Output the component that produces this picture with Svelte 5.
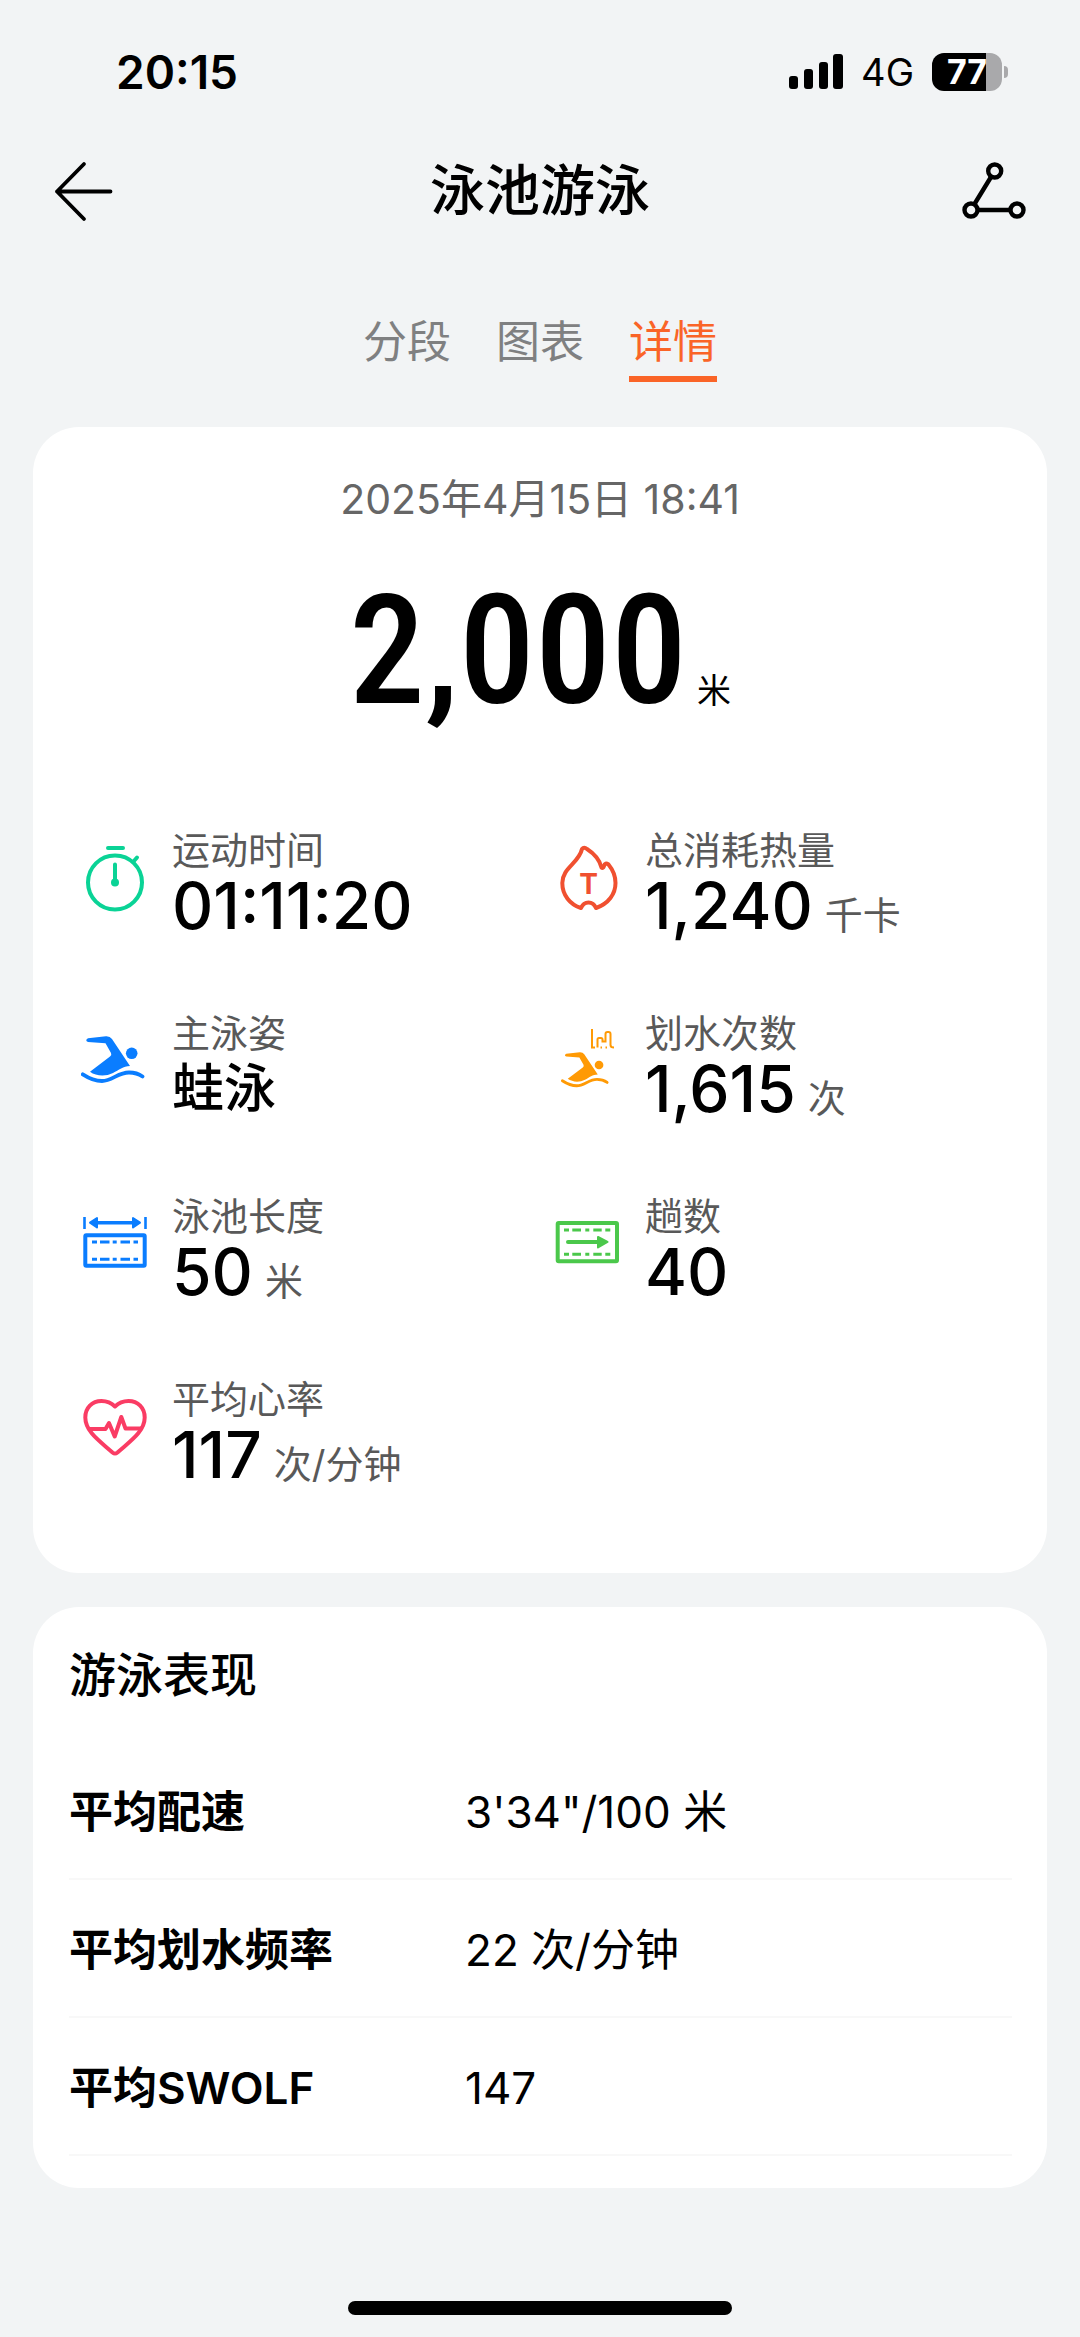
<script lang="ts">
  type Stat = { icon: string; label: string; value: string; unit?: string; text?: boolean };

  const tabs = ["分段", "图表", "详情"];
  let active = $state("详情");

  const stats: Stat[] = [
    { icon: "timer", label: "运动时间", value: "01:11:20" },
    { icon: "flame", label: "总消耗热量", value: "1,240", unit: "千卡" },
    { icon: "swim", label: "主泳姿", value: "蛙泳", text: true },
    { icon: "strokes", label: "划水次数", value: "1,615", unit: "次" },
    { icon: "pool", label: "泳池长度", value: "50", unit: "米" },
    { icon: "laps", label: "趟数", value: "40" },
    { icon: "heart", label: "平均心率", value: "117", unit: "次/分钟" },
  ];

  const performance = [
    { label: "平均配速", value: "3'34\"/100 米" },
    { label: "平均划水频率", value: "22 次/分钟" },
    { label: "平均SWOLF", value: "147" },
  ];
</script>

{#snippet swimmer()}
  <path
    d="M7 10.3 L25 8.2 Q29 8 31 11 L49 38 C42 38 38 42 32 45 C24 49 15 48 9 43.7 L29 28.5 Q31 27 30 25 L24.5 15.3 L7 14 Q3.5 12.5 7 10.3 Z"
    fill="currentColor"
  />
  <circle cx="50.7" cy="25.3" r="5.8" fill="currentColor" />
  <path d="M1.8 46.3 C9 51 14 53 21 53 C31 53 37 44.5 48 44.5 C53 44.5 58 46 61.5 48.5" stroke="currentColor" stroke-width="3.8" stroke-linecap="round" />
{/snippet}

<div class="screen">
  <div class="status">
    <span class="clock">20:15</span>
    <div class="indicators">
      <svg width="54" height="36" viewBox="0 0 54 36" aria-hidden="true">
        <rect x="0" y="22" width="9" height="13" rx="3" />
        <rect x="15" y="15" width="9" height="20" rx="3" />
        <rect x="30" y="8" width="9" height="27" rx="3" />
        <rect x="44" y="0" width="10" height="35" rx="3" />
      </svg>
      <span class="network">4G</span>
      <div class="power">
        <span class="battery">77</span>
        <span class="nub"></span>
      </div>
    </div>
  </div>

  <header class="bar">
    <button class="icon-btn" aria-label="返回">
      <svg width="68" height="68" viewBox="0 0 68 68" fill="none" aria-hidden="true">
        <path d="M32 7 L5 34.5 L32 62 M5 34.5 H58.5" stroke="currentColor" stroke-width="3.8" stroke-linecap="round" stroke-linejoin="round" />
      </svg>
    </button>
    <h1>泳池游泳</h1>
    <button class="icon-btn" aria-label="分享">
      <svg width="68" height="68" viewBox="0 0 68 68" fill="none" stroke="currentColor" stroke-width="4.4" aria-hidden="true">
        <path d="M31 20 L14.5 47 M18 53 H50" />
        <circle cx="34.7" cy="14" r="6.5" />
        <circle cx="11" cy="53" r="6.5" />
        <circle cx="57" cy="53" r="6.5" />
      </svg>
    </button>
  </header>

  <div class="tabs" role="tablist">
    {#each tabs as tab}
      <button
        class="tab"
        class:active={tab === active}
        role="tab"
        aria-selected={tab === active}
        onclick={() => (active = tab)}
      >
        {tab}
      </button>
    {/each}
  </div>

  <main>
    <section class="card summary">
      <p class="date">2025年4月15日 18:41</p>
      <p class="distance">
        <span class="amount">2,000</span>
        <span class="distance-unit">米</span>
      </p>

      <div class="stats">
        {#each stats as stat}
          <div class="stat">
            <svg class="icon {stat.icon}" width="68" height="68" viewBox="0 0 68 68" fill="none" aria-hidden="true">
              {#if stat.icon === "timer"}
                <g stroke="currentColor" stroke-width="4" stroke-linecap="round">
                  <circle cx="34" cy="37.5" r="27" />
                  <path d="M27 3 H42 M34 19.5 V37.5 M52.5 16.5 L56 12.5" />
                </g>
                <circle cx="34" cy="37.5" r="4" fill="currentColor" />
              {:else if stat.icon === "flame"}
                <path
                  d="M28 4 Q30 1.5 33 4 C40 8.5 45.5 14.5 47.5 22.5 Q49 24 50 21 Q51 17 54.5 19.5 C59 25 61.5 31 61.5 38 C61.5 49 54.5 58.5 42 63 C40.5 59.5 38.5 57.5 34.5 57.5 C30.5 57.5 28.5 59.5 27 63 C16 59.5 8.3 50 8.3 38 C8.3 23 25 18 28 4 Z"
                  stroke="currentColor"
                  stroke-width="4"
                  stroke-linejoin="round"
                />
                <text x="34.5" y="48.5" text-anchor="middle">T</text>
              {:else if stat.icon === "swim"}
                {@render swimmer()}
              {:else if stat.icon === "strokes"}
                <g transform="translate(7 18) scale(0.75)">{@render swimmer()}</g>
                <path
                  d="M41 19.5 H38 V1 M43.5 19.5 V11.5 Q43.5 10 45 10 H47 Q48.5 10 48.5 11.5 V13.5 H51.5 V6 Q51.5 4 53.5 4 H54.5 Q56.5 4 56.5 6 V17 Q56.5 19.5 60 19.5 M46.5 19.5 H48 M51.5 19.5 H53"
                  stroke="currentColor"
                  stroke-width="2"
                />
              {:else if stat.icon === "pool"}
                <path d="M3.5 6 V18 M64.5 6 V18" stroke="currentColor" stroke-width="2.6" />
                <path d="M14 11.7 H54" stroke="currentColor" stroke-width="3.6" />
                <path d="M9 11.7 L16 7 V16.4 Z M59 11.7 L52 7 V16.4 Z" fill="currentColor" stroke="currentColor" stroke-width="2" stroke-linejoin="round" />
                <rect x="4.3" y="24.3" width="59.4" height="30.4" rx="1" stroke="currentColor" stroke-width="4" />
                <path
                  d="M11 31 H16 M19 31 H28.5 M31.7 31 H35.7 M39.5 31 H49 M52.5 31 H57 M11 48.3 H16 M19 48.3 H28.5 M31.7 48.3 H35.7 M39.5 48.3 H49 M52.5 48.3 H57"
                  stroke="currentColor"
                  stroke-width="3"
                />
              {:else if stat.icon === "laps"}
                <rect x="3.7" y="12" width="59.3" height="38.3" rx="1" stroke="currentColor" stroke-width="4" />
                <path
                  d="M10 19 H15 M18.3 19 H27 M31.3 19 H35.3 M39.3 19 H47.7 M51.3 19 H56.3 M10 43.3 H15 M18.3 43.3 H27 M31.3 43.3 H35.3 M39.3 43.3 H47.7 M51.3 43.3 H56.3"
                  stroke="currentColor"
                  stroke-width="3"
                />
                <path d="M14 31 H44" stroke="currentColor" stroke-width="4" stroke-linecap="round" />
                <path d="M44 26 L53.5 31 L44 36.5 Z" fill="currentColor" stroke="currentColor" stroke-width="2" stroke-linejoin="round" />
              {:else if stat.icon === "heart"}
                <g stroke="currentColor" stroke-width="4" stroke-linecap="round" stroke-linejoin="round">
                  <path
                    d="M34 12.5 C30 8.5 26 7 20.5 7 C11 7 4.3 14 4.3 23.5 C4.3 38 20 48 31.5 58.5 Q34 60.5 36.5 58.5 C48 48 63.7 38 63.7 23.5 C63.7 14 57 7 47.5 7 C42 7 38 8.5 34 12.5 Z"
                  />
                  <path d="M9 35 H24.5 L28 29 L33.7 42.5 L40.3 23 L44.5 34.5 H60" />
                </g>
              {/if}
            </svg>
            <div class="detail">
              <span class="label">{stat.label}</span>
              <span class="reading">
                <span class="value" class:text={stat.text}>{stat.value}</span>
                {#if stat.unit}<span class="unit">{stat.unit}</span>{/if}
              </span>
            </div>
          </div>
        {/each}
      </div>
    </section>

    <section class="card performance">
      <h2>游泳表现</h2>
      <table>
        <tbody>
          {#each performance as row}
            <tr>
              <th scope="row">{row.label}</th>
              <td>{row.value}</td>
            </tr>
          {/each}
        </tbody>
      </table>
    </section>
  </main>

  <div class="home"><span></span></div>
</div>

<style>
  :global(body) {
    margin: 0;
    background: #f2f4f5;
  }

  .screen {
    min-height: 100vh;
    display: flex;
    flex-direction: column;
    box-sizing: border-box;
    color: #000;
    font-family: Inter, "Noto Sans CJK SC", sans-serif;
  }

  h1,
  h2,
  p {
    margin: 0;
  }

  button {
    padding: 0;
    border: none;
    background: none;
    color: inherit;
    font-family: inherit;
    cursor: pointer;
  }

  svg {
    display: block;
    flex-shrink: 0;
  }

  .status {
    display: flex;
    align-items: center;
    justify-content: space-between;
    height: 144px;
    padding: 0 72px 0 116px;
  }

  .clock {
    font-size: 46px;
    font-weight: 600;
  }

  .indicators {
    display: flex;
    align-items: center;
    gap: 18px;
  }

  .network {
    font-size: 38px;
  }

  .power {
    display: flex;
    align-items: center;
    gap: 2px;
  }

  .battery {
    width: 70px;
    height: 38px;
    border-radius: 12px;
    background: linear-gradient(90deg, #000 77%, #a9a9ab 77%);
    color: #fff;
    font-size: 34px;
    font-weight: 700;
    line-height: 38px;
    text-align: center;
  }

  .nub {
    width: 4px;
    height: 12px;
    border-radius: 0 4px 4px 0;
    background: #a9a9ab;
  }

  .bar {
    display: flex;
    align-items: center;
    justify-content: space-between;
    height: 94px;
    padding: 0 52px;
  }

  h1 {
    padding-bottom: 2px;
    font-size: 55px;
    font-weight: 500;
    line-height: 88px;
  }

  .tabs {
    display: flex;
    justify-content: center;
    gap: 45px;
    margin-top: 70px;
  }

  .tab {
    height: 74px;
    border-bottom: 6px solid transparent;
    color: #7f8081;
    font-size: 44px;
    line-height: 64px;
  }

  .tab.active {
    color: #fa6427;
    border-bottom-color: #fa6427;
  }

  main {
    display: flex;
    flex-direction: column;
    gap: 34px;
    margin-top: 45px;
    padding: 0 33px;
  }

  .card {
    border-radius: 46px;
    background: #fff;
  }

  .summary {
    padding: 42px 20px 18px 48px;
  }

  .date {
    margin-right: 28px;
    color: #666;
    font-size: 41px;
    line-height: 60px;
    text-align: center;
  }

  .distance {
    display: flex;
    align-items: baseline;
    justify-content: center;
    gap: 10px;
    height: 180px;
    margin-top: 32px;
    margin-right: 28px;
    line-height: 180px;
  }

  .amount {
    font-family: "Roboto Condensed", Roboto, sans-serif;
    font-size: 152px;
    font-weight: 500;
  }

  .distance-unit {
    font-size: 34px;
  }

  .stats {
    display: grid;
    grid-template-columns: 1fr 1fr;
    grid-auto-rows: 183px;
    margin-top: 82px;
  }

  .stat {
    display: flex;
    align-items: flex-start;
    gap: 23px;
  }

  .icon {
    margin-top: 22px;
  }

  .icon text {
    fill: currentColor;
    font-size: 28px;
    font-weight: 700;
  }

  .timer {
    color: #0ad396;
  }

  .flame {
    color: #f05030;
  }

  .swim,
  .pool {
    color: #0a7dff;
  }

  .strokes {
    color: #ff9a05;
  }

  .laps {
    color: #4bc84b;
  }

  .heart {
    color: #fa3c64;
  }

  .detail {
    display: flex;
    flex-direction: column;
  }

  .label {
    color: #595959;
    font-size: 38px;
    line-height: 54px;
  }

  .reading {
    display: flex;
    align-items: baseline;
    gap: 12px;
    height: 58px;
    line-height: 58px;
  }

  .value {
    font-size: 64px;
    font-weight: 500;
  }

  .value.text {
    font-size: 52px;
  }

  .unit {
    color: #595959;
    font-size: 38px;
  }

  .performance {
    padding: 34px 35px 32px 36px;
  }

  h2 {
    font-size: 47px;
    font-weight: 500;
    line-height: 68px;
  }

  table {
    width: 100%;
    margin-top: 32px;
    border-collapse: collapse;
    table-layout: fixed;
  }

  tr {
    border-bottom: 2px solid #f8f8f8;
  }

  th,
  td {
    box-sizing: border-box;
    height: 138px;
    padding: 4px 0 0;
    font-size: 44px;
    line-height: 64px;
    text-align: left;
  }

  th {
    width: 42%;
    font-weight: 600;
  }

  td {
    font-weight: 400;
  }

  .home {
    display: flex;
    justify-content: center;
    margin-top: auto;
    padding: 40px 0 22px;
  }

  .home span {
    width: 384px;
    height: 14px;
    border-radius: 7px;
    background: #000;
  }
</style>
